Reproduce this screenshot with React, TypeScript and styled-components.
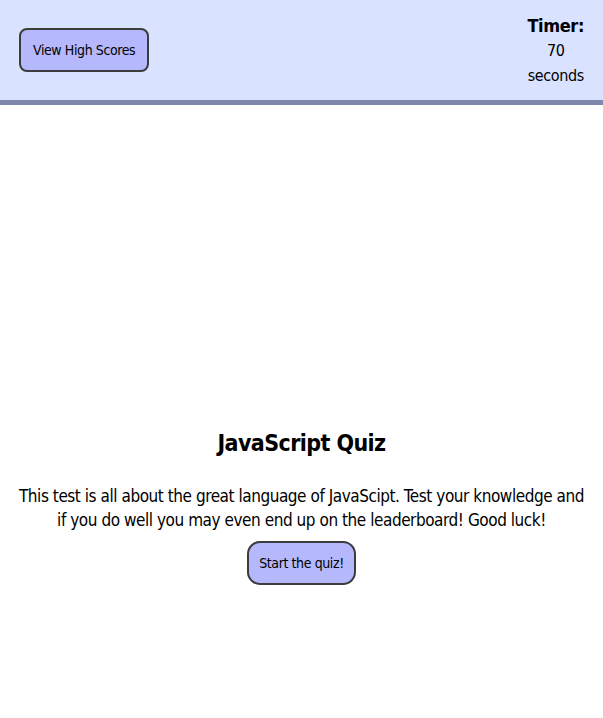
import styled, { createGlobalStyle } from "styled-components";

const GlobalStyle = createGlobalStyle`
    body {
        margin: 0;
        font-family: "DejaVu Sans Condensed", "Liberation Sans Narrow", "Roboto", sans-serif;
        color: #000;
        background-color: #fff;
    }
`;

const App: React.FC = () => {
    return (
        <>
            <GlobalStyle />
            <Header>
                <PillButton>View High Scores</PillButton>
                <Timer>
                    <TimerLabel>Timer:</TimerLabel>
                    <TimerValue>70</TimerValue>
                    <TimerValue>seconds</TimerValue>
                </Timer>
            </Header>
            <Main>
                <Title>JavaScript Quiz</Title>
                <Intro>
                    This test is all about the great language of JavaScipt. Test your knowledge and
                    if you do well you may even end up on the leaderboard! Good luck!
                </Intro>
                <PillButton large>Start the quiz!</PillButton>
            </Main>
        </>
    );
};

const Header = styled.header`
    display: flex;
    align-items: center;
    justify-content: space-between;
    height: 100px;
    padding: 0 19px;
    background-color: #d9e2ff;
    border-bottom: 5px solid #7d88ab;
`;

const PillButton = styled.button<{ large?: boolean }>`
    font-family: inherit;
    font-size: 14px;
    letter-spacing: -0.4px;
    color: #000;
    background-color: #b5b8fc;
    border: 2px solid #3c3c3c;
    border-radius: ${(props) => (props.large ? "13px" : "8px")};
    height: 44px;
    padding: ${(props) => (props.large ? "0 10px" : "0 12px")};
    cursor: pointer;
`;

const Timer = styled.div`
    display: flex;
    flex-flow: column;
    align-items: center;
    line-height: 25px;
    letter-spacing: -0.4px;
`;

const TimerLabel = styled.span`
    font-size: 18px;
    font-weight: bold;
`;

const TimerValue = styled.span`
    font-size: 16px;
`;

const Main = styled.main`
    display: flex;
    flex-flow: column;
    align-items: center;
    padding: 322px 14px 0;
    text-align: center;
`;

const Title = styled.h1`
    margin: 0 0 25px;
    font-size: 23px;
    letter-spacing: -0.6px;
    line-height: 32px;
`;

const Intro = styled.p`
    margin: 0 0 9px;
    font-size: 17px;
    letter-spacing: -0.45px;
    line-height: 24px;
`;

export default App;
